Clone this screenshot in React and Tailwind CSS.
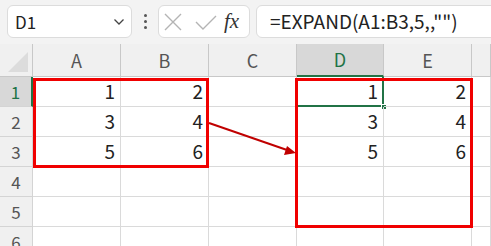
import React from 'react';

const font = { fontFamily: '"Noto Sans CJK JP", "Noto Sans", sans-serif' };

const cols = ['A', 'B', 'C', 'D', 'E', ''];
const data = [
  ['1', '2', '', '1', '2', ''],
  ['3', '4', '', '3', '4', ''],
  ['5', '6', '', '5', '6', ''],
  ['', '', '', '', '', ''],
  ['', '', '', '', '', ''],
  ['', '', '', '', '', ''],
];

function FormulaBar() {
  return (
    <div className="h-[44px] bg-[#f3f3f3] flex items-start pt-[5px]">
      <div className="shrink-0 ml-[7px] w-[125px] h-[33px] bg-white border border-[#dcdcdc] rounded-[6px] flex items-center justify-between pl-[7px] pr-[6px]">
        <span className="text-[17px] text-[#222]">D1</span>
        <svg width="12" height="8" viewBox="0 0 12 8">
          <path d="M1.5 1.5 L6 6 L10.5 1.5" fill="none" stroke="#444" strokeWidth="1.3" />
        </svg>
      </div>
      <div className="shrink-0 w-[26px] h-[33px] flex flex-col items-center justify-center gap-[3px]">
        <span className="w-[3px] h-[3px] bg-[#555] rounded-full" />
        <span className="w-[3px] h-[3px] bg-[#555] rounded-full" />
        <span className="w-[3px] h-[3px] bg-[#555] rounded-full" />
      </div>
      <div className="shrink-0 w-[92px] h-[33px] bg-white border border-[#dcdcdc] rounded-[6px] flex items-center pl-[2px]">
        <svg width="22" height="22" viewBox="0 0 22 22" className="ml-[1px]">
          <path d="M3 3 L19 19 M19 3 L3 19" stroke="#b4b4b4" strokeWidth="1.4" />
        </svg>
        <svg width="24" height="22" viewBox="0 0 24 22" className="ml-[10px]">
          <path d="M2 11 L9 18 L22 5" fill="none" stroke="#b4b4b4" strokeWidth="1.4" />
        </svg>
        <span
          className="ml-[6px] text-[21px] italic text-[#333]"
          style={{ fontFamily: '"Liberation Serif", serif' }}
        >
          fx
        </span>
      </div>
      <div className="shrink-0 ml-[6px] w-[260px] h-[33px] bg-white border border-[#dcdcdc] rounded-[6px] flex items-center pl-[13px]">
        <span className="text-[19px] text-[#222] whitespace-nowrap">=EXPAND(A1:B3,5,,"")</span>
      </div>
    </div>
  );
}

export default function App() {
  return (
    <div className="relative w-[491px] h-[246px] overflow-hidden bg-white" style={font}>
      <FormulaBar />
      <div className="grid grid-cols-[33px_88px_88px_88px_87px_88px_1fr] grid-rows-[33px_30px_30px_30px_30px_30px_30px]">
        <div className="bg-[#f0f0f0] border-r border-b border-[#c8c8c8] relative">
          <svg width="33" height="33" viewBox="0 0 33 33" className="absolute inset-0">
            <path d="M8 28 L28 28 L28 8 Z" fill="#dcdcdc" />
          </svg>
        </div>
        {cols.map((c, i) => (
          <div
            key={'h' + i}
            className={
              c === 'D'
                ? 'bg-[#d8d8d8] border-r border-[#c8c8c8] border-b-2 border-b-[#217346] flex items-center justify-center text-[18px] text-[#217346]'
                : 'bg-[#f0f0f0] border-r border-b border-[#c8c8c8] flex items-center justify-center text-[18px] text-[#555]'
            }
          >
            {c}
          </div>
        ))}
        {data.map((row, r) => (
          <React.Fragment key={'r' + r}>
            <div
              className={
                r === 0
                  ? 'bg-[#d8d8d8] border-r-2 border-r-[#217346] border-b border-[#d4d4d4] flex items-center justify-center text-[17px] text-[#217346]'
                  : 'bg-[#f0f0f0] border-r border-b border-[#d4d4d4] flex items-center justify-center text-[17px] text-[#555]'
              }
            >
              {r + 1}
            </div>
            {row.map((v, c) => (
              <div
                key={c}
                className="relative border-r border-b border-[#dadada] flex items-center justify-end pr-[5px] text-[19px] text-[#222]"
              >
                {v}
                {r === 0 && c === 3 && (
                  <>
                    <div className="absolute left-0 right-[-1px] bottom-[-1px] h-[2px] bg-[#217346]" />
                    <div className="absolute top-0 bottom-0 right-[-1px] w-[2px] bg-[#217346]" />
                    <div className="absolute right-[-4px] bottom-[-4px] w-[6px] h-[6px] bg-[#217346] border border-white" />
                  </>
                )}
              </div>
            ))}
          </React.Fragment>
        ))}
      </div>

      {/* annotations */}
      <div className="absolute left-[33px] top-[78px] w-[176px] h-[90px] border-[3px] border-[#f00000]" />
      <div className="absolute left-[295px] top-[78px] w-[178px] h-[150px] border-[3px] border-[#f00000]" />
      <svg className="absolute left-0 top-0" width="491" height="246" viewBox="0 0 491 246">
        <line x1="209" y1="123" x2="287" y2="150" stroke="#c00000" strokeWidth="2" />
        <path d="M296 153 L284 155 L287 146 Z" fill="#c00000" />
      </svg>
    </div>
  );
}
